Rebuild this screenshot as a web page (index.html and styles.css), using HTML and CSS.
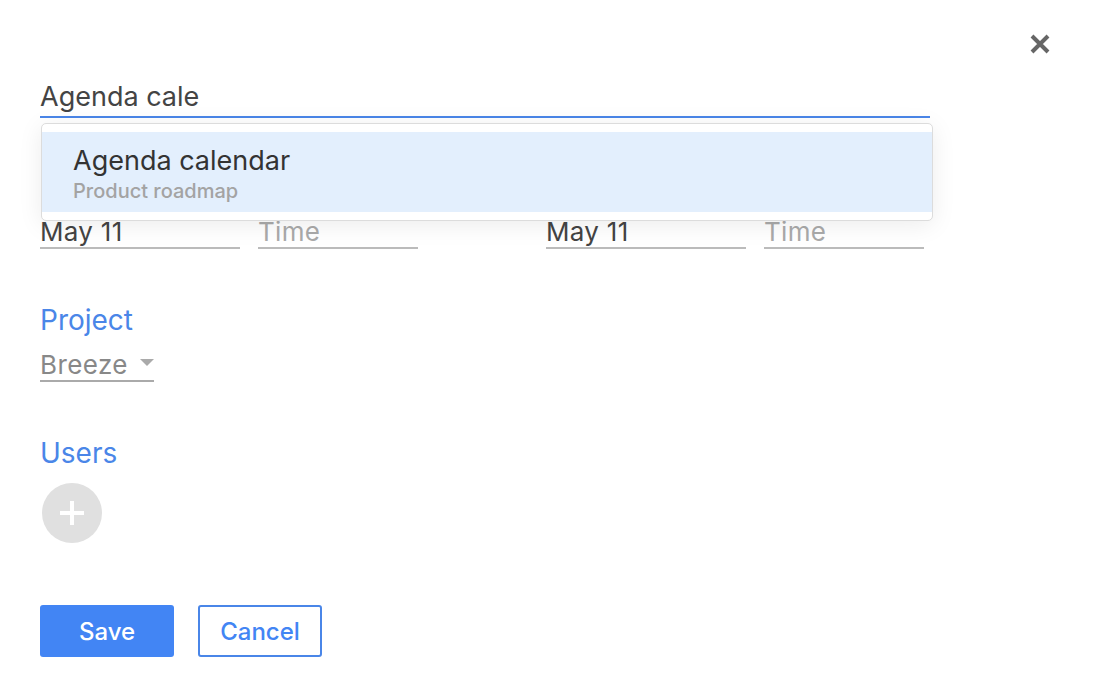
FILE: index.html
```html
<!DOCTYPE html>
<html lang="en">
<head>
    <meta charset="UTF-8">
    <title>New event</title>
    <link rel="stylesheet" href="styles.css">
</head>
<body>
    <div class="dialog">
        <button class="close" aria-label="Close">
            <svg width="22" height="22" viewBox="0 0 22 22">
                <path d="M3 3 L19 19 M19 3 L3 19" stroke="#666" stroke-width="4" stroke-linecap="butt"/>
            </svg>
        </button>

        <div class="title-field">
            <input class="title-input" type="text" value="Agenda cale">
            <div class="suggestions">
                <div class="suggestion active">
                    <div class="suggestion-name">Agenda calendar</div>
                    <div class="suggestion-meta">Product roadmap</div>
                </div>
            </div>
        </div>

        <div class="dates">
            <div class="date-group">
                <div class="label">Start</div>
                <div class="date-inputs">
                    <input class="field date" type="text" value="May 11">
                    <input class="field time" type="text" placeholder="Time">
                </div>
            </div>
            <div class="date-group">
                <div class="label">End</div>
                <div class="date-inputs">
                    <input class="field date" type="text" value="May 11">
                    <input class="field time" type="text" placeholder="Time">
                </div>
            </div>
        </div>

        <div class="section">
            <div class="label">Project</div>
            <div class="select">
                <span>Breeze</span>
                <span class="caret"></span>
            </div>
        </div>

        <div class="section">
            <div class="label">Users</div>
            <button class="add-user" aria-label="Add user">
                <svg width="24" height="24" viewBox="0 0 24 24">
                    <path d="M12 0 V24 M0 12 H24" stroke="#fff" stroke-width="4"/>
                </svg>
            </button>
        </div>

        <div class="actions">
            <button class="btn btn-primary">Save</button>
            <button class="btn btn-outline">Cancel</button>
        </div>
    </div>
</body>
</html>
```

FILE: styles.css
```css
body {
    margin: 0;
    font-family: Inter, "Noto Sans", sans-serif;
    background: #fff;
    color: #444;
}

.dialog {
    position: relative;
    padding: 80px 40px 0;
    width: 890px;
}

.close {
    position: absolute;
    top: 33px;
    left: 1029px;
    padding: 0;
    border: none;
    background: none;
    width: 22px;
    height: 22px;
    cursor: pointer;
}

.close svg {
    display: block;
}

input {
    font-family: inherit;
    border: none;
    outline: none;
    background: none;
    padding: 0;
    margin: 0;
    box-sizing: border-box;
}

.title-field {
    position: relative;
}

.title-input {
    display: block;
    width: 890px;
    height: 38px;
    padding-bottom: 4px;
    font-size: 27px;
    color: #444;
    border-bottom: 2px solid #4a86e8;
}

.suggestions {
    position: absolute;
    top: 43px;
    left: 1px;
    width: 892px;
    box-sizing: border-box;
    padding: 8px 0;
    background: #fff;
    border: 1px solid #dcdcdc;
    border-radius: 5px;
    box-shadow: 0 4px 24px rgba(0, 0, 0, 0.08);
    z-index: 2;
}

.suggestion {
    height: 80px;
    box-sizing: border-box;
    padding: 13px 31px 0;
}

.suggestion.active {
    background: #e3effd;
}

.suggestion-name {
    font-size: 27px;
    line-height: 31px;
    color: #333;
}

.suggestion-meta {
    margin-top: 2px;
    font-size: 20px;
    line-height: 26px;
    font-weight: 500;
    color: #a3a3a3;
}

.label {
    font-size: 28px;
    line-height: 32px;
    color: #4a86e8;
}

.dates {
    display: flex;
    gap: 128px;
    margin-top: 53px;
}

.date-inputs {
    display: flex;
    gap: 18px;
    margin-top: 12px;
}

.field {
    height: 34px;
    font-size: 26px;
    letter-spacing: 0.3px;
    color: #444;
    border-bottom: 2px solid #bbb;
}

.field::placeholder {
    color: #aaa;
}

.date {
    width: 200px;
}

.time {
    width: 160px;
}

.section {
    margin-top: 55px;
}

.select {
    display: inline-flex;
    align-items: center;
    gap: 12px;
    margin-top: 12px;
    height: 34px;
    font-size: 26px;
    letter-spacing: 0.4px;
    color: #888;
    border-bottom: 2px solid #aaa;
    box-sizing: border-box;
}

.caret {
    width: 0;
    height: 0;
    border-left: 7px solid transparent;
    border-right: 7px solid transparent;
    border-top: 7px solid #aaa;
    margin-top: -4px;
}

.add-user {
    display: flex;
    align-items: center;
    justify-content: center;
    margin: 14px 0 0 2px;
    width: 60px;
    height: 60px;
    padding: 0;
    border: none;
    border-radius: 50%;
    background: #e0e0e0;
    cursor: pointer;
}

.actions {
    display: flex;
    gap: 24px;
    margin-top: 62px;
}

.btn {
    height: 52px;
    font-family: inherit;
    font-size: 24px;
    font-weight: 500;
    border-radius: 3px;
    cursor: pointer;
    box-sizing: border-box;
}

.btn-primary {
    width: 134px;
    background: #4285f4;
    color: #fff;
    border: none;
}

.btn-outline {
    width: 124px;
    background: #fff;
    color: #4285f4;
    border: 2px solid #4a86e8;
}
```
